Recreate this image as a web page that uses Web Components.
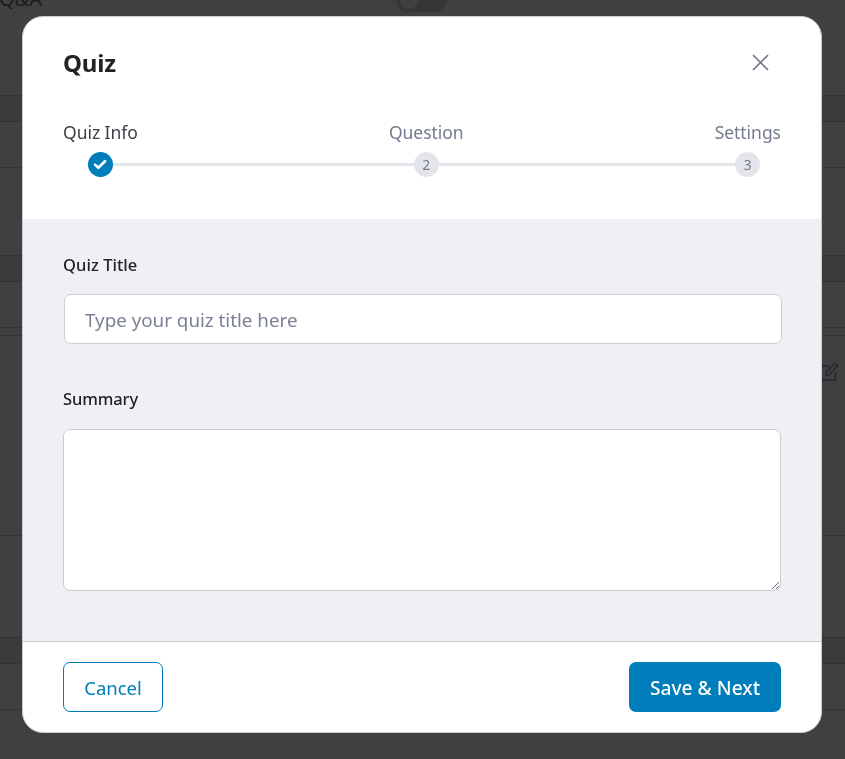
<!DOCTYPE html>
<html lang="en"><head><meta charset="utf-8"><title>Quiz</title>
<style>
html,body{margin:0;height:759px;overflow:hidden;background:#404040}
body{font-family:"Noto Sans","Open Sans",sans-serif}
</style></head><body>
<backdrop-page>
  <page-row h="96" top>
    <span class="qa">Q&amp;A</span>
  </page-row>
  <page-row h="26" dark></page-row>
  <page-row h="46"></page-row>
  <page-row h="88"></page-row>
  <page-row h="26" dark></page-row>
  <page-row h="46"></page-row>
  <page-row h="8"></page-row>
  <page-row h="200" edit></page-row>
  <page-row h="102"></page-row>
  <page-row h="26" dark></page-row>
  <page-row h="46"></page-row>
</backdrop-page>
<quiz-modal heading="Quiz">
  <quiz-stepper slot="stepper">
    <step-item label="Quiz Info" state="done"></step-item>
    <step-item label="Question" n="2"></step-item>
    <step-item label="Settings" n="3"></step-item>
  </quiz-stepper>
  <form-field label="Quiz Title" kind="input" placeholder="Type your quiz title here"></form-field>
  <form-field label="Summary" kind="textarea"></form-field>
  <ui-button slot="footer" variant="outline">Cancel</ui-button>
  <ui-button slot="footer" variant="solid">Save &amp; Next</ui-button>
</quiz-modal>
<script>
function def(name, html, extra){
  const t=document.createElement('template');t.innerHTML=html;
  customElements.define(name,class extends HTMLElement{
    constructor(){super();this.attachShadow({mode:'open'}).appendChild(t.content.cloneNode(true));}
    connectedCallback(){extra&&extra.call(this,this.shadowRoot);}
  });
}
def('backdrop-page',`<style>:host{display:block;position:relative;height:759px;overflow:hidden;color:#1a1c20}</style><slot></slot>`);
def('page-row',`<style>
:host{display:flex;box-sizing:border-box;border-bottom:1px solid #333;background:#404040;position:relative;justify-content:flex-end;font-size:20px}
:host([dark]){background:#3b3b3b}
:host([top]){display:block}
::slotted(.qa){position:absolute;left:-1px;top:-13px;line-height:24px}
.toggle{display:none;position:absolute;left:396px;top:-12px;width:51px;height:24px;border-radius:12px;background:#343638}
.toggle i{position:absolute;left:4px;top:3px;width:18px;height:18px;border-radius:50%;background:#404040}
.edit{display:none;margin:26px 7px 0 0;width:18px;height:19px}
</style><slot></slot><div class="toggle"><i></i></div>
<svg class="edit" viewBox="0 0 18 19" fill="none" stroke="#24272c" stroke-width="1.6"><path d="M9 4H1.5a1 1 0 0 0-1 1V17a1 1 0 0 0 1 1H14.5a1 1 0 0 0 1-1V10"/><path d="M6.5 10 14 2.2a1.8 1.8 0 0 1 2.6 2.6L9 12.6 6 13.2z"/></svg>`,
function(s){
  this.style.height=this.getAttribute('h')+'px';
  if(this.hasAttribute('top'))s.querySelector('.toggle').style.display='block';
  if(this.hasAttribute('edit'))s.querySelector('.edit').style.display='block';
});
def('quiz-modal',`<style>
:host{position:fixed;left:22px;top:16px;width:800px;height:717px;box-sizing:border-box;border:1px solid #c9cbd1;border-radius:21px;background:#fff;display:flex;flex-direction:column;overflow:hidden;color:#212327}
header{height:202px;box-sizing:border-box;padding:28px 40px 0;flex:none;display:flex;flex-direction:column}
.top{display:flex;justify-content:space-between;align-items:center;height:36px}
h2{margin:0;font-size:24px;font-weight:700;line-height:36px;letter-spacing:-.2px}
.close{width:17px;height:17px;margin:-2px 12px 0 0}
.stepper{margin-top:39px}
main{flex:1;background:#eef0f5;padding:34px 40px 0;box-sizing:border-box}
footer{height:91px;box-sizing:border-box;border-top:1px solid #cdced5;display:flex;justify-content:space-between;align-items:flex-start;padding:20px 40px 0;flex:none}
</style>
<header><div class="top"><h2></h2><svg class="close" viewBox="0 0 17 17" stroke="#6f7688" stroke-width="1.7" fill="none"><path d="M1 1 16 16M16 1 1 16"/></svg></div><div class="stepper"><slot name="stepper"></slot></div></header>
<main><slot></slot></main><footer><slot name="footer"></slot></footer>`,
function(s){s.querySelector('h2').textContent=this.getAttribute('heading');});
def('quiz-stepper',`<style>
:host{display:flex;justify-content:space-between;position:relative}
.line{position:absolute;left:37px;right:34px;top:43px;height:3px;background:#e3e5ea}
</style><div class="line"></div><slot></slot>`);
def('step-item',`<style>
:host{display:flex;flex-direction:column;align-items:center;position:relative;font-size:17.5px;color:#757b8e}
:host([state=done]){color:#3e4047}
.label{line-height:24px;height:24px;letter-spacing:-.03px}
.c{margin-top:8px;width:25px;height:25px;border-radius:50%;background:#e3e5ea;display:flex;align-items:center;justify-content:center;font-size:14px;color:#767c8f}
:host([state=done]) .c{background:#007dbb}
svg{width:14px;height:11px;display:none}
:host([state=done]) svg{display:block}
</style><div class="label"></div><div class="c"><span></span><svg viewBox="0 0 14 11" fill="none" stroke="#fff" stroke-width="2.6" stroke-linecap="round" stroke-linejoin="round"><path d="M2 5.6 5.3 8.8 12 2.2"/></svg></div>`,
function(s){s.querySelector('.label').textContent=this.getAttribute('label');s.querySelector('span').textContent=this.getAttribute('n')||'';});
def('form-field',`<style>
:host{display:block;margin-bottom:43px}
label{display:block;font-size:16.5px;font-weight:500;line-height:24px;color:#212327;margin-bottom:17px;letter-spacing:.05px}
:host([kind=textarea]) label{margin-bottom:18px;letter-spacing:-.1px}
input,textarea{display:block;box-sizing:border-box;background:#fff;border:1px solid #cdced5;border-radius:7px;font:inherit;font-size:18.8px;color:#212327;outline:none}
input{width:718px;height:50px;margin-left:1px;padding:2px 20px 0}
textarea{width:718px;height:162px;padding:10px 20px}
::placeholder{color:#7b8195;opacity:1}
</style><label></label><div class="slot"></div>`,
function(s){
  s.querySelector('label').textContent=this.getAttribute('label');
  const k=document.createElement(this.getAttribute('kind'));
  if(this.hasAttribute('placeholder'))k.placeholder=this.getAttribute('placeholder');
  s.querySelector('.slot').appendChild(k);
});
def('ui-button',`<style>
:host{display:inline-flex;align-items:center;justify-content:center;box-sizing:border-box;height:50px;border-radius:7px;font-size:18.5px;font-weight:400;padding-top:1px}
:host([variant=outline]){width:100px;border:1px solid #007dbb;color:#007dbb;background:#fff}
:host([variant=solid]){width:152px;background:#007dbb;color:#fff;font-weight:500;font-size:19.2px}
</style><slot></slot>`);
</script>
</body></html>
